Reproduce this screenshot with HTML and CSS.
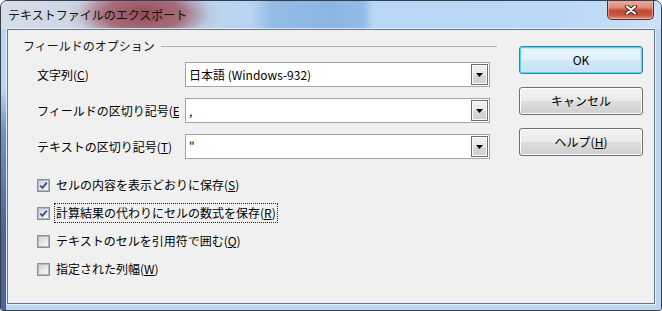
FILE: index.html
```html
<!DOCTYPE html>
<html lang="ja">
<head>
<meta charset="utf-8">
<title>テキストファイルのエクスポート</title>
<link rel="stylesheet" href="styles.css">
</head>
<body>
<div class="window">
  <div class="titlebar">
    <span class="title">テキストファイルのエクスポート</span>
    <div class="close">
      <svg width="14" height="10" viewBox="0 0 14 10"><path d="M3 1.5 L11 8.5 M11 1.5 L3 8.5" stroke="#4a2420" stroke-width="4.2" stroke-linecap="round" fill="none"/><path d="M3 1.5 L11 8.5 M11 1.5 L3 8.5" stroke="#ffffff" stroke-width="2.2" stroke-linecap="round" fill="none"/></svg>
    </div>
  </div>
  <div class="frame-body">
    <div class="client">
      <div class="left">
        <div class="group-head">
          <span class="group-label">フィールドのオプション</span>
          <span class="group-line"></span>
        </div>
        <div class="form">
          <div class="lbl">文字列(<u>C</u>)</div>
          <div class="combo"><span class="combo-text">日本語 (Windows-932)</span><span class="dd"><svg width="7" height="4" viewBox="0 0 7 4"><path d="M0 0H7L3.5 4Z" fill="#000"/></svg></span></div>
          <div class="lbl">フィールドの区切り記号(<u>E</u>)</div>
          <div class="combo"><span class="combo-text">,</span><span class="dd"><svg width="7" height="4" viewBox="0 0 7 4"><path d="M0 0H7L3.5 4Z" fill="#000"/></svg></span></div>
          <div class="lbl">テキストの区切り記号(<u>T</u>)</div>
          <div class="combo"><span class="combo-text">"</span><span class="dd"><svg width="7" height="4" viewBox="0 0 7 4"><path d="M0 0H7L3.5 4Z" fill="#000"/></svg></span></div>
        </div>
        <div class="checks">
          <div class="chk"><span class="cb"><svg class="mark" width="11" height="11" viewBox="0 0 11 11"><path d="M2.3 5.6 L4.5 7.9 L8.8 2.6" stroke="#3d5291" stroke-width="1.9" fill="none"/></svg></span><span class="chk-text">セルの内容を表示どおりに保存(<u>S</u>)</span></div>
          <div class="chk"><span class="cb"><svg class="mark" width="11" height="11" viewBox="0 0 11 11"><path d="M2.3 5.6 L4.5 7.9 L8.8 2.6" stroke="#3d5291" stroke-width="1.9" fill="none"/></svg></span><span class="chk-text focus">計算結果の代わりにセルの数式を保存(<u>R</u>)</span></div>
          <div class="chk"><span class="cb"></span><span class="chk-text">テキストのセルを引用符で囲む(<u>Q</u>)</span></div>
          <div class="chk"><span class="cb"></span><span class="chk-text">指定された列幅(<u>W</u>)</span></div>
        </div>
      </div>
      <div class="right">
        <div class="btn default">OK</div>
        <div class="btn">キャンセル</div>
        <div class="btn">ヘルプ(<u>H</u>)</div>
      </div>
    </div>
  </div>
</div>
</body>
</html>
```
FILE: styles.css
```css
* { box-sizing: border-box; }
html, body { margin: 0; padding: 0; background: #ffffff; }
body {
  font-family: "Noto Sans CJK JP", "Noto Sans", sans-serif;
  font-size: 12px;
  color: #000;
}
u { text-decoration: underline; text-underline-offset: 1px; text-decoration-thickness: 1px; }

.window {
  width: 662px;
  height: 311px;
  border: 1px solid #34404f;
  border-radius: 7px 7px 3px 3px;
  background: #bcd7f2;
  display: flex;
  flex-direction: column;
  overflow: hidden;
  position: relative;
}

.titlebar {
  height: 28px;
  flex: none;
  display: flex;
  align-items: center;
  padding-left: 7px;
  background:
    radial-gradient(ellipse 78px 34px at 142px 13px, rgba(140,40,50,0.8) 0, rgba(150,55,65,0.65) 50%, rgba(180,150,170,0.2) 85%, rgba(190,190,210,0) 100%),
    linear-gradient(to right, #d6dde6 0, #cdd8e6 70px, #bcd5ef 215px, #b7d4f2 250px, #93bbe4 272px, #8cb6e2 330px, #92bbe6 362px, #b8d6f5 372px, #bad7f5 560px, #cce2f8 662px);
}
.title {
  font-size: 12px;
  line-height: 16px;
  color: #111;
  margin-top: -1px;
}
.close {
  position: absolute;
  top: -1px;
  right: 7px;
  width: 47px;
  height: 20px;
  border: 1px solid #5b2b25;
  border-top: none;
  border-radius: 0 0 5px 5px;
  background: linear-gradient(to bottom, #e9b2a6 0, #db8c79 40%, #c54a32 55%, #c8553d 80%, #e19477 100%);
  box-shadow: inset 0 0 0 1px rgba(255,220,210,0.45);
  display: flex;
  align-items: center;
  justify-content: center;
}

.frame-body {
  flex: 1;
  display: flex;
  padding: 0 6px 6px 6px;
  background:
    linear-gradient(to bottom, rgba(80,110,170,0) 0, rgba(80,110,170,0) 60px, rgba(60,90,160,0.55) 100px, rgba(40,60,130,0.75) 200px, rgba(40,60,130,0.75) 100%) left top / 5px 100% no-repeat,
    #bcd7f2;
}

.client {
  flex: 1;
  display: flex;
  background: #f0f0f0;
  border: 1px solid #66788c;
  box-shadow: 0 0 0 1px rgba(235,244,252,0.8);
}

.left {
  width: 489px;
  padding: 8px 0 0 15px;
}
.group-head {
  display: flex;
  align-items: center;
  height: 16px;
  width: 474px;
}
.group-label { line-height: 16px; color: #151515; white-space: nowrap; }
.group-line {
  flex: 1;
  height: 1px;
  margin-left: 6px;
  margin-top: 1px;
  background: #a9b0b7;
}

.form {
  margin: 8px 0 0 14px;
  display: grid;
  grid-template-columns: 142px 305px;
  column-gap: 6px;
  grid-auto-rows: 25px;
  row-gap: 11px;
  align-items: center;
}
.lbl {
  white-space: nowrap;
  overflow: hidden;
  line-height: 17px;
}
.combo {
  height: 25px;
  border: 1px solid #a4a4a4;
  background: #fff;
  display: flex;
  align-items: center;
  padding: 0 1px 0 3px;
}
.combo-text { line-height: 16px; flex: 1; white-space: nowrap; }
.dd {
  width: 17px;
  height: 21px;
  border: 1px solid #6f6f6f;
  background: linear-gradient(to bottom, #f3f3f3 0, #e6e6e6 50%, #d8d8d8 51%, #cfcfcf 100%);
  box-shadow: inset 0 0 0 1px #fbfbfb;
  display: flex;
  align-items: center;
  justify-content: center;
  padding-top: 1px;
}

.checks {
  margin: 12px 0 0 14px;
  display: flex;
  flex-direction: column;
}
.chk {
  height: 28px;
  display: flex;
  align-items: center;
}
.cb {
  width: 13px;
  height: 13px;
  flex: none;
  border: 1px solid #8e8f8f;
  background: #f4f4f4;
  display: flex;
  align-items: center;
  justify-content: center;
  position: relative;
}
.cb::before {
  content: "";
  width: 9px;
  height: 9px;
  border: 1px solid #b3b8be;
  background: linear-gradient(135deg, #cfd3d8 0, #e6e8ea 55%, #f7f7f7 100%);
}
.cb .mark { position: absolute; left: 0; top: 0; }
.chk-text {
  margin-left: 4px;
  line-height: 18px;
  padding: 0 1px;
  border: 1px solid transparent;
  white-space: nowrap;
}
.chk-text.focus { border: 1px dotted #222; }

.right {
  padding: 16px 0 0 22px;
  display: flex;
  flex-direction: column;
  gap: 13px;
}
.btn {
  width: 124px;
  height: 28px;
  border: 1px solid #707070;
  border-radius: 3px;
  background: linear-gradient(to bottom, #f2f2f2 0, #ebebeb 48%, #dddddd 52%, #cfcfcf 100%);
  box-shadow: inset 0 0 0 1px #fcfcfc;
  display: flex;
  align-items: center;
  justify-content: center;
  line-height: 16px;
}
.btn.default {
  border-color: #3c7fb1;
  box-shadow: inset 0 0 0 1px #48d8fb, inset 0 0 0 2px #c4e8f8;
  background: linear-gradient(to bottom, #eaf6fd 0, #e0f0fa 48%, #d2e8f6 52%, #c8e0f2 100%);
}
```
